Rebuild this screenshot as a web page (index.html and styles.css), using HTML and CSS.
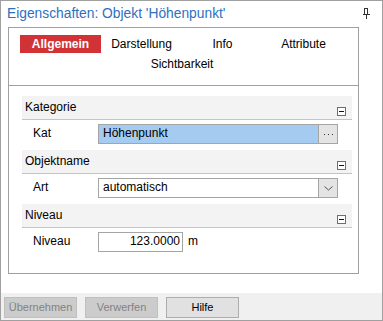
FILE: index.html
```html
<!DOCTYPE html>
<html>
<head>
<meta charset="utf-8">
<link rel="stylesheet" href="styles.css">
</head>
<body>
<div class="window">
  <div class="titlebar">
    <span class="title">Eigenschaften: Objekt 'Höhenpunkt'</span>
    <svg class="pin" width="7" height="11" viewBox="0 0 7 11">
      <rect x="1.5" y="0.5" width="3" height="6" fill="none" stroke="#333" stroke-width="1"/>
      <rect x="1" y="0" width="1" height="7" fill="#333"/>
      <rect x="0" y="6" width="7" height="1" fill="#333"/>
      <rect x="3" y="7" width="1" height="4" fill="#333"/>
    </svg>
  </div>
  <div class="panel">
    <div class="tabs">
      <div class="tab active">Allgemein</div>
      <div class="tab">Darstellung</div>
      <div class="tab">Info</div>
      <div class="tab">Attribute</div>
      <div class="tab">Sichtbarkeit</div>
    </div>
    <div class="grid">
      <div class="sec-head"><span class="sec-title">Kategorie</span><span class="toggle"></span></div>
      <div class="row">
        <span class="label">Kat</span>
        <div class="field wide">
          <span class="value selected">Höhenpunkt</span>
          <span class="fbtn">
            <svg width="9" height="1" viewBox="0 0 9 1"><rect x="0" y="0" width="1" height="1" fill="#333"/><rect x="4" y="0" width="1" height="1" fill="#333"/><rect x="8" y="0" width="1" height="1" fill="#333"/></svg>
          </span>
        </div>
      </div>
      <div class="sec-head"><span class="sec-title">Objektname</span><span class="toggle"></span></div>
      <div class="row">
        <span class="label">Art</span>
        <div class="field wide">
          <span class="value">automatisch</span>
          <span class="fbtn">
            <svg width="9" height="5" viewBox="0 0 9 5"><polyline points="0.5,0.5 4.5,4 8.5,0.5" fill="none" stroke="#555" stroke-width="1"/></svg>
          </span>
        </div>
      </div>
      <div class="sec-head"><span class="sec-title">Niveau</span><span class="toggle"></span></div>
      <div class="row">
        <span class="label">Niveau</span>
        <div class="field short">
          <span class="value num">123.0000</span>
        </div>
        <span class="unit">m</span>
      </div>
    </div>
  </div>
  <div class="spacer"></div>
  <div class="footer">
    <div class="button disabled">Übernehmen</div>
    <div class="button disabled">Verwerfen</div>
    <div class="button">Hilfe</div>
  </div>
</div>
</body>
</html>
```

FILE: styles.css
```css
* { box-sizing: border-box; }
html, body { margin: 0; padding: 0; background: #ffffff; }
body { font-family: "Liberation Sans", Arial, sans-serif; font-size: 12px; color: #000; }

.window {
  width: 383px;
  height: 321px;
  border: 1px solid #a0a0a0;
  display: flex;
  flex-direction: column;
  background: #fff;
}

.titlebar {
  height: 26px;
  display: flex;
  align-items: flex-start;
  padding-left: 6px;
  flex: none;
}
.title {
  font-size: 13.8px;
  line-height: 16px;
  padding-top: 5px;
  color: #2f70c0;
  flex: 1;
}
.pin {
  margin-top: 7px;
  margin-right: 12px;
}

.panel {
  margin-left: 7px;
  width: 351px;
  height: 247px;
  border: 1px solid #a0a0a0;
  flex: none;
}

.tabs {
  height: 58px;
  border-bottom: 1px solid #a0a0a0;
  padding: 7px 14px 0 11px;
  display: flex;
  flex-wrap: wrap;
  justify-content: center;
  align-content: flex-start;
  row-gap: 2px;
}
.tab {
  width: 81px;
  height: 18px;
  line-height: 18px;
  text-align: center;
}
.tab.active {
  background: #d03236;
  color: #fff;
  font-weight: bold;
}

.grid {
  margin: 10px 0 0 13px;
  width: 330px;
}
.sec-head {
  height: 24px;
  background: #f3f3f3;
  border-bottom: 1px solid #c4c4c4;
  display: flex;
  justify-content: space-between;
  padding: 4px 6px 0 3px;
  line-height: 14px;
}
.toggle {
  width: 9px;
  height: 9px;
  border: 1px solid #6e6e6e;
  background: #fff;
  margin-top: 7px;
  display: flex;
  align-items: center;
  justify-content: center;
}
.toggle::after {
  content: "";
  width: 5px;
  height: 1px;
  background: #111;
}

.row {
  height: 30px;
  display: flex;
  align-items: flex-start;
  padding: 4px 0 0 11px;
}
.label {
  width: 65px;
  line-height: 18px;
}
.field {
  height: 20px;
  border: 1px solid #a5a5a5;
  display: flex;
  background: #fff;
}
.field.wide { width: 240px; }
.field.short { width: 85px; }
.value {
  flex: 1;
  line-height: 16px;
  padding-left: 4px;
}
.value.selected { background: #a6cbf1; }
.value.num { text-align: right; padding-right: 2px; }
.fbtn {
  width: 19px;
  border-left: 1px solid #a5a5a5;
  background: #e4e4e4;
  display: flex;
  align-items: center;
  justify-content: center;
}
.unit {
  margin-left: 5px;
  line-height: 18px;
}

.spacer { flex: 1; }

.footer {
  height: 27px;
  background: #f0f0f0;
  display: flex;
  gap: 8px;
  padding: 4px 0 0 3px;
  flex: none;
}
.button {
  width: 73px;
  height: 21px;
  border: 1px solid #adadad;
  background: #e1e1e1;
  font-size: 11px;
  line-height: 19px;
  text-align: center;
}
.button.disabled {
  background: #cccccc;
  border-color: #bfbfbf;
  color: #838383;
}
```
